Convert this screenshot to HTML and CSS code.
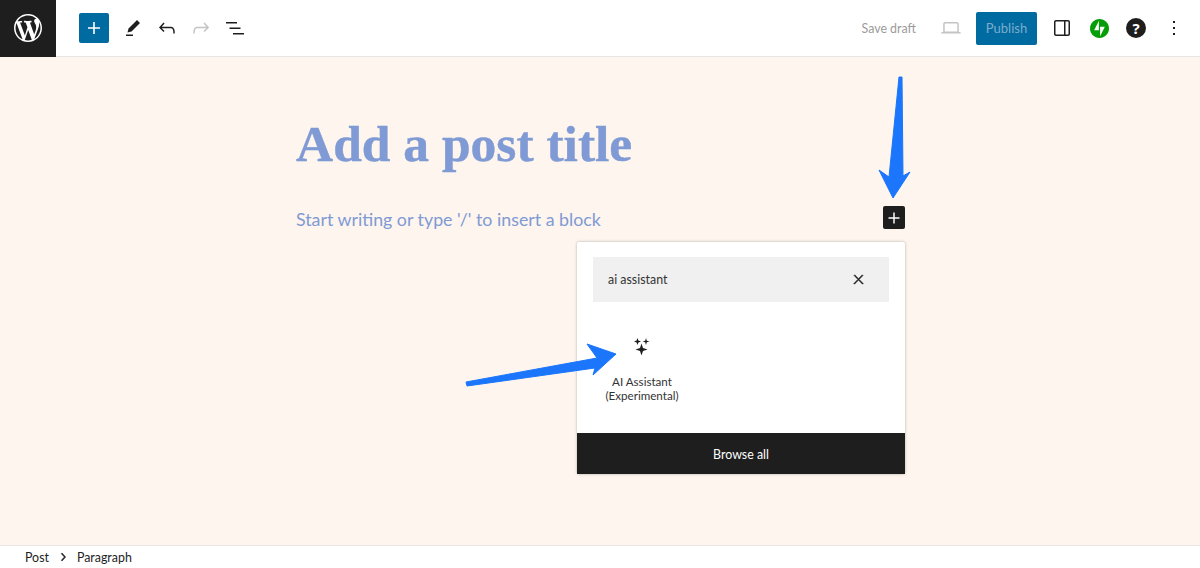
FILE: index.html
```html
<!DOCTYPE html>
<html lang="en">
  <head>
    <meta charset="UTF-8" />
    <title>Add New Post</title>
    <link rel="stylesheet" href="styles.css">
  </head>
  <body>
    <div class="editor">
      <header class="topbar">
        <a class="logo" href="#">
          <svg viewBox="0 0 20 20" width="28" height="28"><path fill="#fff" d="M20 10c0-5.51-4.49-10-10-10C4.48 0 0 4.49 0 10c0 5.52 4.48 10 10 10 5.51 0 10-4.48 10-10zM7.78 15.37L4.37 6.22c.55-.02 1.17-.08 1.17-.08.5-.06.44-1.13-.06-1.11 0 0-1.45.11-2.37.11-.18 0-.37 0-.58-.01C4.12 2.69 6.87 1.11 10 1.11c2.33 0 4.45.87 6.05 2.34-.68-.11-1.65.39-1.65 1.58 0 .74.45 1.36.9 2.1.35.61.55 1.36.55 2.46 0 1.49-1.4 5-1.4 5l-3.03-8.37c.54-.02.82-.17.82-.17.5-.05.44-1.25-.06-1.22 0 0-1.44.12-2.38.12-.87 0-2.33-.12-2.33-.12-.5-.03-.56 1.2-.06 1.22l.92.08 1.26 3.41zM17.41 10c.24-.64.74-1.87.43-4.25.7 1.29 1.05 2.71 1.05 4.25 0 3.29-1.73 6.24-4.4 7.78.97-2.59 1.94-5.2 2.92-7.78zM6.1 18.09C3.12 16.65 1.11 13.53 1.11 10c0-1.3.23-2.48.72-3.59C3.25 10.3 4.67 14.2 6.1 18.09zm4.03-6.63l2.58 6.98c-.86.29-1.76.45-2.71.45-.79 0-1.57-.11-2.29-.33.81-2.38 1.62-4.74 2.42-7.1z"/></svg>
        </a>
        <div class="tools">
          <button class="add-btn">
            <svg viewBox="0 0 24 24" width="24" height="24"><path fill="#fff" d="M18 11.2h-5.2V6h-1.6v5.2H6v1.6h5.2V18h1.6v-5.2H18z"/></svg>
          </button>
          <svg class="icon" viewBox="0 0 24 24"><path d="m19 7-3-3-8.5 8.5-1 4 4-1L19 7Zm-7 11.5H5V20h7v-1.5Z"/></svg>
          <svg class="icon" viewBox="0 0 24 24"><path d="M18.3 11.7c-.6-.6-1.4-.9-2.3-.9H6.7l2.9-3.3-1.1-1-4.5 5L8.5 16l1-1-2.7-2.7H16c.5 0 .9.2 1.3.5 1 1 1 3.4 1 4.5v.3h1.5v-.2c0-1.5 0-4.3-1.5-5.7z"/></svg>
          <svg class="icon icon-off" viewBox="0 0 24 24"><path d="M15.6 6.5l-1.1 1 2.9 3.3H8c-.9 0-1.7.3-2.3.9-1.4 1.5-1.4 4.2-1.4 5.6v.2h1.5v-.3c0-1.1 0-3.5 1-4.5.3-.3.7-.5 1.3-.5h9.2L14.5 15l1.1 1.1 4.6-4.6-4.6-5z"/></svg>
          <svg class="icon" viewBox="0 0 24 24"><path d="M3 6h11v1.5H3V6Zm3.5 5.5h11V13h-11v-1.5ZM21 17H10v1.5h11V17Z"/></svg>
        </div>
        <div class="actions">
          <span class="save-draft">Save draft</span>
          <svg class="icon icon-off preview" viewBox="0 0 24 24"><path d="M20.5 16h-.7V8c0-1.1-.9-2-2-2H6.2c-1.1 0-2 .9-2 2v8h-.7c-.8 0-1.5.7-1.5 1.5h20c0-.8-.7-1.5-1.5-1.5zM5.7 8c0-.3.2-.5.5-.5h11.6c.3 0 .5.2.5.5v7.6H5.7V8z"/></svg>
          <button class="publish">Publish</button>
          <svg class="icon sidebar" viewBox="0 0 24 24"><path d="M18 4H6c-1.1 0-2 .9-2 2v12c0 1.1.9 2 2 2h12c1.1 0 2-.9 2-2V6c0-1.1-.9-2-2-2zm-4 14.5H6c-.3 0-.5-.2-.5-.5V6c0-.3.2-.5.5-.5h8v13zm4.5-.5c0 .3-.2.5-.5.5h-2.5v-13H18c.3 0 .5.2.5.5v12z"/></svg>
          <svg class="jetpack" viewBox="0 0 32 32"><path fill="#069e08" d="M16 0C7.2 0 0 7.2 0 16s7.2 16 16 16 16-7.2 16-16S24.800 0 16 0z"/><path fill="#fff" d="M15 19H7l8-16v16zM17 29V13h8l-8 16z"/></svg>
          <span class="help">?</span>
          <svg class="icon more" viewBox="0 0 24 24"><path d="M13 19h-2v-2h2v2zm0-6h-2v-2h2v2zm0-6h-2V5h2v2z"/></svg>
        </div>
      </header>

      <main class="canvas">
        <div class="post">
          <h1 class="post-title">Add a post title</h1>
          <div class="para-row">
            <p class="placeholder">Start writing or type '/' to insert a block</p>
            <button class="block-add">
              <svg viewBox="0 0 24 24" width="24" height="24"><path fill="#fff" d="M18 11.2h-5.2V6h-1.6v5.2H6v1.6h5.2V18h1.6v-5.2H18z"/></svg>
            </button>
          </div>

          <div class="inserter">
            <div class="inserter-body">
              <div class="search">
                <span>ai assistant</span>
                <svg class="search-clear" viewBox="0 0 24 24" width="15" height="15"><path d="M13 11.800l6.100-6.300-1-1-6.100 6.200-6.100-6.200-1 1 6.100 6.300-6.500 6.700 1 1 6.500-6.600 6.500 6.600 1-1z"/></svg>
              </div>
              <div class="block-item">
                <svg viewBox="0 0 18 18" width="18" height="18"><path fill="#1e1e1e" d="M8.500 6.500 10 11l4.500 1.500L10 14l-1.500 4.500L7 14l-4.500-1.500L7 11zM4.500 1 5.400 3.600 8 4.500 5.400 5.400 4.500 8 3.600 5.400 1 4.500 3.600 3.600zM13 1 13.800 3.700 16.500 4.500 13.800 5.300 13 8 12.200 5.300 9.500 4.500 12.200 3.700z"/></svg>
                <span class="block-name">AI Assistant (Experimental)</span>
              </div>
            </div>
            <div class="browse-all">Browse all</div>
          </div>
        </div>
      </main>

      <footer class="crumbs">
        <span>Post</span>
        <svg viewBox="0 0 24 24" width="16" height="16"><path fill="#1e1e1e" stroke="#1e1e1e" stroke-width="0.8" d="M10.600 6 9.400 7l4.600 5-4.600 5 1.200 1 5.400-6z"/></svg>
        <span>Paragraph</span>
      </footer>

      <!-- annotation arrows drawn over the screenshot -->
      <svg class="arrows" viewBox="0 0 1200 568" width="1200" height="568">
        <path d="M899 77 902 77 903 176 910 172 893 198 879 170 889 177z"/>
        <path d="M466 382 597 358 587 344 616 354 593 375 595 368 467 386z"/>
      </svg>
    </div>
  </body>
</html>
```

FILE: styles.css
```css
* {
  box-sizing: border-box;
}
body {
  margin: 0;
  font-family: Lato, "Noto Sans", sans-serif;
  font-size: 12.400px;
  color: #1e1e1e;
  background: #fff;
}
button {
  font-family: inherit;
  border: none;
  padding: 0;
}
.editor {
  position: relative;
  display: flex;
  flex-direction: column;
  height: 568px;
  overflow: hidden;
}
.topbar {
  display: flex;
  align-items: center;
  height: 57px;
  border-bottom: 1px solid #e8e6e3;
  flex-shrink: 0;
}
.logo {
  display: flex;
  align-items: center;
  justify-content: center;
  width: 56px;
  height: 57px;
  background: #1e1e1e;
}
.tools {
  display: flex;
  align-items: center;
  gap: 10px;
  margin-left: 23px;
}
.add-btn {
  display: flex;
  align-items: center;
  justify-content: center;
  width: 30px;
  height: 30px;
  margin-right: 2px;
  background: #006ba1;
  border-radius: 2px;
}
.icon {
  display: block;
  width: 24px;
  height: 24px;
  fill: #1e1e1e;
}
.icon-off {
  fill: #c4c4c4;
}
.actions {
  display: flex;
  align-items: center;
  margin-left: auto;
}
.save-draft {
  color: #9b9b9b;
}
.preview {
  margin-left: 23px;
}
.publish {
  width: 61px;
  height: 33px;
  margin-left: 13px;
  background: #006ba1;
  color: #7eaccb;
  font-size: 13px;
  border-radius: 2px;
}
.sidebar {
  margin-left: 13px;
}
.jetpack {
  display: block;
  width: 19px;
  height: 19px;
  margin-left: 16px;
}
.help {
  width: 20px;
  height: 20px;
  margin-left: 17px;
  border-radius: 50%;
  background: #1e1e1e;
  color: #fff;
  font-family: "Noto Sans", sans-serif;
  font-size: 15px;
  font-weight: 700;
  line-height: 20px;
  text-align: center;
}
.more {
  margin-left: 16px;
  margin-right: 14px;
}
.canvas {
  flex: 1;
  background: #fdf5ee;
  border-bottom: 1px solid #e8e6e3;
}
.post {
  position: relative;
  width: 610px;
  margin: 0 auto;
  padding-top: 57px;
}
.post-title {
  margin: 0 0 0 1px;
  font-family: "Liberation Serif", serif;
  font-size: 51.500px;
  line-height: 60px;
  font-weight: 700;
  color: #7f9ad4;
  -webkit-text-stroke: 0.4px #7f9ad4;
}
.para-row {
  display: flex;
  align-items: center;
  justify-content: space-between;
  margin-top: 32px;
  height: 23px;
}
.placeholder {
  margin: 2px 0 0 1px;
  font-size: 17.800px;
  color: #7f9ad4;
}
.block-add {
  display: flex;
  align-items: center;
  justify-content: center;
  width: 22px;
  height: 23px;
  background: #1e1e1e;
  border-radius: 2px;
}
.inserter {
  position: absolute;
  top: 185px;
  right: 0;
  width: 328px;
  height: 232px;
  display: flex;
  flex-direction: column;
  background: #fff;
  border-radius: 2px;
  box-shadow: 0 0 3px rgba(0, 0, 0, 0.3);
}
.inserter-body {
  flex: 1;
  padding: 15px 16px;
}
.search {
  display: flex;
  align-items: center;
  justify-content: space-between;
  height: 45px;
  padding: 0 23px 0 15px;
  background: #f0f0f0;
  color: #333;
}
.search-clear {
  fill: #1e1e1e;
  stroke: #1e1e1e;
  stroke-width: 1;
}
.block-item {
  display: flex;
  flex-direction: column;
  align-items: center;
  width: 98px;
  margin-top: 35px;
  text-align: center;
}
.block-name {
  margin-top: 20px;
  font-size: 11.600px;
  line-height: 14px;
  color: #333;
}
.browse-all {
  height: 41px;
  background: #1e1e1e;
  color: #fff;
  line-height: 43px;
  text-align: center;
}
.crumbs {
  display: flex;
  align-items: center;
  gap: 6px;
  height: 22px;
  padding-left: 25px;
  flex-shrink: 0;
}
.arrows {
  position: absolute;
  top: 0;
  left: 0;
  fill: #1b76fb;
  stroke: #1b76fb;
  stroke-width: 1;
  stroke-linejoin: round;
  pointer-events: none;
}
```
